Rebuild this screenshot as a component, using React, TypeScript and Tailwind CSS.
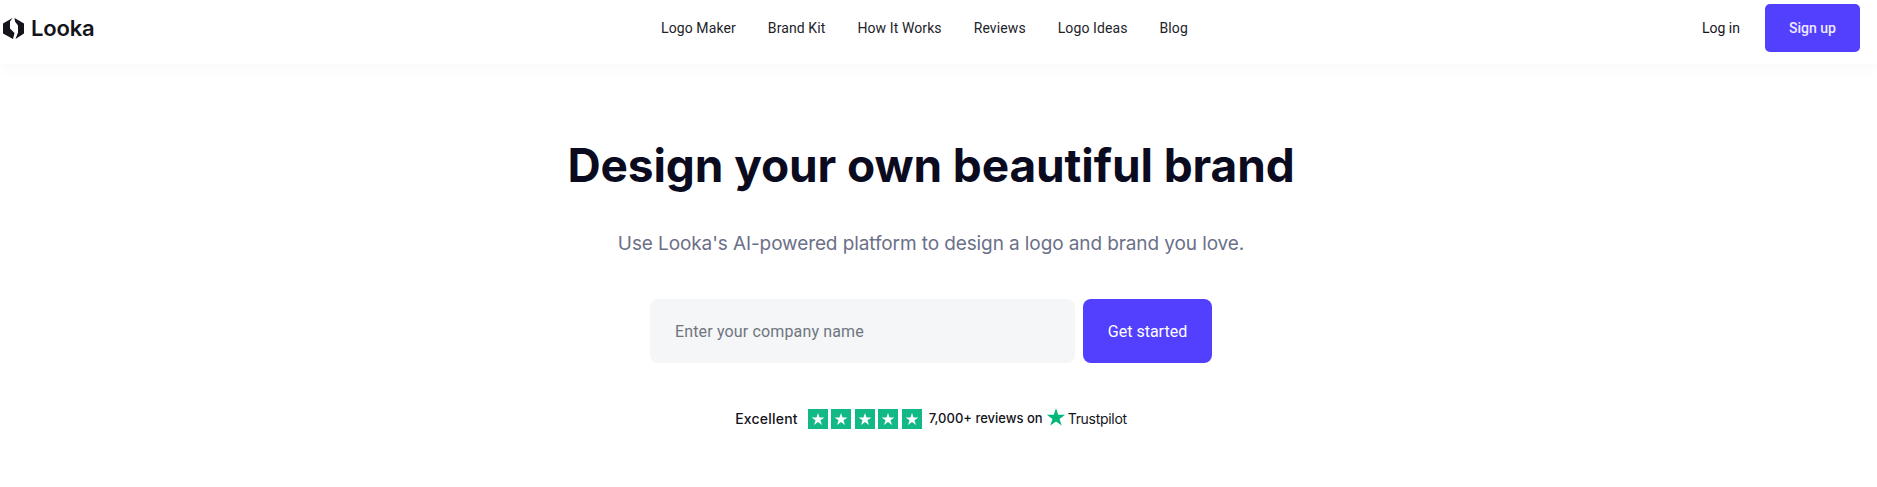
const Star = ({ className }: { className: string }) => (
  <svg viewBox="0 0 24 24" className={className} fill="currentColor">
    <path d="M12 1.5l2.6 7.9H23l-6.8 4.9 2.6 8-6.8-5-6.8 5 2.6-8L1 9.4h8.4z" />
  </svg>
);

const navLinks = ["Logo Maker", "Brand Kit", "How It Works", "Reviews", "Logo Ideas", "Blog"];

export default function App() {
  return (
    <div className="h-[487px] bg-white font-['Inter',sans-serif] overflow-hidden">
      <header className="h-[64px] pb-[8px] flex items-center pl-[3px] pr-[17px] bg-white shadow-[0_6px_12px_rgba(20,20,60,0.025)]">
        <div className="flex items-center gap-[7px] w-[658px]">
          <svg viewBox="0 0 21 21" className="w-[21px] h-[21px] text-[#14141c]" fill="currentColor">
            <path d="M9.5 0L0 5.5V15.5L10 21L11.5 15L7 10.5V3.5Z" />
            <path d="M11.5 0L21 5.5V15.5L12.5 21L15 14.5V7.5L12 3.5Z" />
          </svg>
          <span className="text-[22px] font-semibold text-[#14141c] tracking-[-0.2px]">Looka</span>
        </div>
        <nav className="flex items-center gap-[32px] font-['Roboto',sans-serif] text-[14px] tracking-[0.1px] text-[#22222a] flex-1">
          {navLinks.map((link) => (
            <a key={link} className="whitespace-nowrap">{link}</a>
          ))}
        </nav>
        <div className="flex items-center gap-[25px] font-['Roboto',sans-serif]">
          <a className="text-[14px] text-[#14141c]">Log in</a>
          <button className="w-[95px] h-[48px] rounded-[5px] bg-[#5340ff] text-[14px] font-medium text-[#eeeaff]">Sign up</button>
        </div>
      </header>

      <main className="flex flex-col items-center pr-[15px]">
        <h1 className="mt-[69px] text-[46px] tracking-[-0.1px] leading-[64px] font-bold text-[#0b0b1f] whitespace-nowrap">Design your own beautiful brand</h1>
        <p className="mt-[31px] text-[19px] tracking-[-0.1px] leading-[32px] text-[#6b7088]">Use Looka's AI-powered platform to design a logo and brand you love.</p>
        <div className="mt-[39px] flex items-stretch gap-[8px] h-[64px] font-['Roboto',sans-serif]">
          <div className="w-[425px] rounded-[8px] bg-[#f4f6f8] flex items-center pl-[25px] pt-[2px] text-[16px] tracking-[0.15px] text-[#6f7580]">Enter your company name</div>
          <button className="w-[129px] pt-[2px] rounded-[8px] bg-[#5340ff] text-[16px] text-white">Get started</button>
        </div>
        <div className="mt-[44px] flex items-center text-[13px] font-medium text-[#14141c]">
          <span className="text-[14px] tracking-[0.2px]">Excellent</span>
          <div className="ml-[10px] flex gap-[3.5px]">
            {[0, 1, 2, 3, 4].map((i) => (
              <div key={i} className="w-[20px] h-[20px] bg-[#12b886] flex items-center justify-center">
                <Star className="w-[14px] h-[14px] text-white" />
              </div>
            ))}
          </div>
          <span className="ml-[7px]">7,000+ reviews on</span>
          <Star className="ml-[3px] w-[20px] h-[20px] text-[#00b67a] mb-[3px]" />
          <span className="ml-[2px] text-[14px] font-normal tracking-[-0.3px]">Trustpilot</span>
        </div>
      </main>
    </div>
  );
}
